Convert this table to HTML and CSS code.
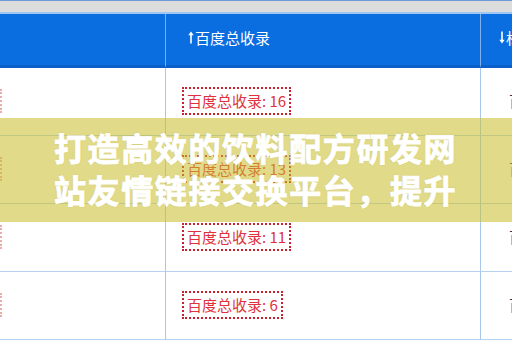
FILE: index.html
```html
<!DOCTYPE html>
<html lang="zh">
<head>
<meta charset="utf-8">
<link rel="stylesheet" href="styles.css">
</head>
<body>
<div class="page">
  <div class="topbar"></div>
  <div class="table">
    <div class="th th-first"></div>
    <div class="th"><svg class="arrow" width="6" height="13" viewBox="0 0 6 13"><path d="M3 12.5V2" stroke="#fff" stroke-width="1.6" fill="none"/><path d="M0.3 4.2L3 0.5L5.7 4.2Z" fill="#fff"/></svg>百度总收录</div>
    <div class="th th-last"><svg class="arrow" width="6" height="13" viewBox="0 0 6 13"><path d="M3 0.5V11" stroke="#fff" stroke-width="1.6" fill="none"/><path d="M0.3 8.8L3 12.5L5.7 8.8Z" fill="#fff"/></svg>标</div>

    <div class="td td-first"><span class="stub"></span></div>
    <div class="td"><span class="badge">百度总收录: 16</span></div>
    <div class="td td-last"><span class="cut">百</span></div>

    <div class="td td-first"><span class="stub"></span></div>
    <div class="td"><span class="badge">百度总收录: 13</span></div>
    <div class="td td-last"><span class="cut">百</span></div>

    <div class="td td-first"><span class="stub"></span></div>
    <div class="td"><span class="badge">百度总收录: 11</span></div>
    <div class="td td-last"><span class="cut">百</span></div>

    <div class="td td-first"><span class="stub"></span></div>
    <div class="td"><span class="badge">百度总收录: 6</span></div>
    <div class="td td-last"><span class="cut">百</span></div>
  </div>
  <div class="band">
    <p class="title">打造高效的饮料配方研发网站友情链接交换平台，提升</p>
  </div>
</div>
</body>
</html>
```

FILE: styles.css
```css
* { box-sizing: border-box; }
html, body {
  margin: 0;
  padding: 0;
  width: 512px;
  height: 340px;
  overflow: hidden;
  background: #ffffff;
}
.page {
  position: relative;
  width: 512px;
  height: 340px;
  overflow: hidden;
  font-family: "Noto Sans CJK SC", "Microsoft YaHei", sans-serif;
}
.topbar {
  height: 14px;
  background: #dcdcdc;
  border-top: 1px solid #6f9bd9;
  border-bottom: 2px solid #9fc6f0;
}
.table {
  display: grid;
  grid-template-columns: 166px 315px 31px;
  grid-auto-rows: 68px;
  grid-template-rows: 54px;
}
.th {
  background: #0a6de0;
  color: #ffffff;
  font-size: 15px;
  display: flex;
  align-items: center;
  padding-left: 22px;
  border-right: 1px solid #7fb0ec;
  border-bottom: 3px solid #0a60c8;
  padding-bottom: 4px;
  white-space: nowrap;
}
.arrow {
  flex: none;
  margin-right: 1px;
}
.th-first { padding-left: 0; }
.th-last { border-right: none; padding-left: 18px; overflow: hidden; }
.td {
  border-right: 1px solid #a8c8ee;
  border-bottom: 1px solid #b6d3f2;
  display: flex;
  align-items: center;
  padding-left: 16px;
  padding-bottom: 2px;
}
.td-first { padding-left: 0; }
.td-last { border-right: none; padding-left: 28px; overflow: hidden; }
.stub {
  display: block;
  width: 2px;
  height: 24px;
  border-right: 2px dotted #d44a3a;
  opacity: 0.45;
}
.badge {
  display: inline-block;
  border: 2px dotted #c8202c;
  color: #e0323c;
  font-size: 15px;
  line-height: 20px;
  padding: 2px 3px 2px 3px;
  white-space: nowrap;
}
.cut {
  color: #333333;
  font-size: 15px;
  white-space: nowrap;
}
.band {
  position: absolute;
  left: 0;
  top: 118px;
  width: 512px;
  height: 104px;
  background: rgba(200, 190, 40, 0.55);
  padding-top: 8px;
}
.title {
  margin: 0 auto;
  width: 404px;
  height: 84px;
  overflow: hidden;
  color: #ffffff;
  font-family: "Noto Sans CJK SC", sans-serif;
  font-weight: 700;
  font-size: 32px;
  line-height: 42px;
  letter-spacing: 1.6px;
  -webkit-text-stroke: 0.9px #ffffff;
  text-shadow: 0 0 2px rgba(120, 110, 30, 0.25);
}
```
